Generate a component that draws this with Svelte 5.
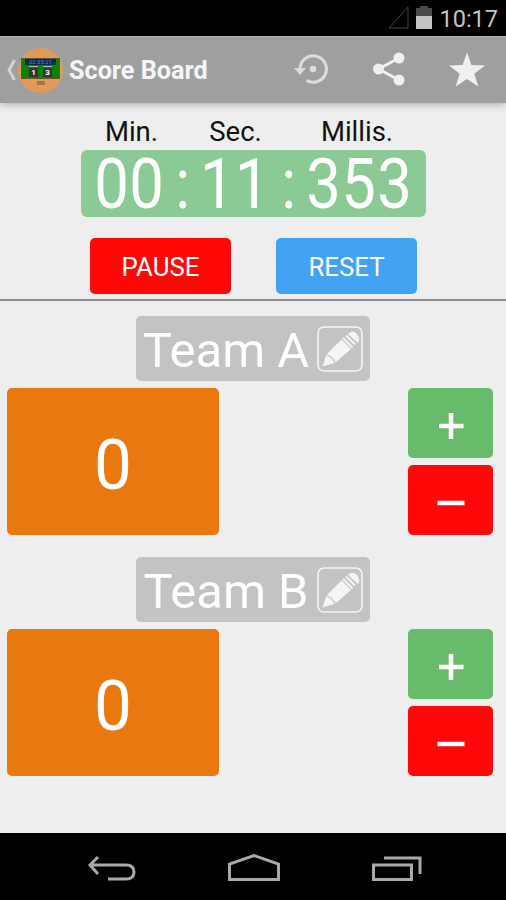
<script lang="ts">
	type Team = { name: string; score: number };

	let teams = $state<Team[]>([
		{ name: 'Team A', score: 0 },
		{ name: 'Team B', score: 0 }
	]);
	let clock = $state('00:11:353');

	function change(team: Team, by: number) {
		team.score = Math.max(0, team.score + by);
	}
</script>

<div class="screen">
	<div class="status">
		<svg class="signal" viewBox="0 0 21 23"><path d="M20 1v21H1z" /></svg>
		<svg class="battery" viewBox="0 0 16 23">
			<path d="M4 0h8v2h4v9H0V2h4z" fill="#4a4a4a" />
			<path d="M0 10h16v13H0z" fill="#c4c4c4" />
		</svg>
		<span>10:17</span>
	</div>

	<header>
		<svg class="up" viewBox="0 0 10 22"><path d="M8.500 1 3 11l5.500 10" /></svg>
		<div class="logo">
			<div class="board">
				<div class="board-time">02:35:21</div>
				<div class="board-names"><i></i><i></i></div>
				<div class="board-score"><b>1</b><b>3</b></div>
			</div>
			<div class="board-foot"></div>
		</div>
		<h1>Score Board</h1>
		<svg class="restore" viewBox="0 0 34 30">
			<path d="M6 15a13.200 13.200 0 1 1 6.500 11.400" fill="none" stroke="#dcdcdc" stroke-width="3" />
			<path d="M0 14h12l-6 7z" fill="#dcdcdc" />
			<circle cx="19" cy="15" r="3.200" fill="#dcdcdc" />
		</svg>
		<svg class="share" viewBox="0 0 32 34">
			<path d="M26 6 5.500 17 26 28" fill="none" stroke="#f0f0f0" stroke-width="3" />
			<circle cx="26" cy="6" r="5.500" />
			<circle cx="5.500" cy="17" r="5.500" />
			<circle cx="26" cy="28" r="5.500" />
		</svg>
		<svg class="star" viewBox="0 0 36 34">
			<path d="m18 0 4.400 12.600L36 13 25.300 21.300 29.300 34 18 26.400 6.700 34l4-12.700L0 13l13.600-.4z" />
		</svg>
	</header>

	<section class="timer">
		<div class="units">
			<span>Min.</span>
			<span>Sec.</span>
			<span>Millis.</span>
		</div>
		<div class="clock">
			{#each clock as char}
				<span class:one={char === '1'}>{char}</span>
			{/each}
		</div>
		<div class="controls">
			<button class="red">PAUSE</button>
			<button class="blue">RESET</button>
		</div>
	</section>

	<main>
		{#each teams as team}
			<section class="team">
				<button class="name">
					<span>{team.name}</span>
					<svg viewBox="0 0 46 46">
						<rect x="1" y="1" width="44" height="44" rx="6" fill="none" stroke="#f5f5f5" stroke-width="1.700" />
						<path d="M5.500 40.500 9.500 28.500 24.500 13.500 34 23 18.500 36.500z" fill="#f5f5f5" />
						<path d="m9.500 28.500 4.500 2.500 4.500 5.500" fill="none" stroke="#c3c3c3" stroke-width="1.200" />
						<path d="m26 12 9.500 9.500M29 9.500l9 9" stroke="#f5f5f5" stroke-width="2" />
						<path d="M31 8q5-5 9 0t1 9z" fill="#f5f5f5" />
					</svg>
				</button>
				<div class="row">
					<div class="score"><span>{team.score}</span></div>
					<div class="steps">
						<button class="green" aria-label="Add point" onclick={() => change(team, 1)}>
							<svg viewBox="0 0 28 28"><path d="M14 1v26M2 14h24.500" /></svg>
						</button>
						<button class="red" aria-label="Remove point" onclick={() => change(team, -1)}>
							<svg viewBox="0 0 28 28"><path d="M.5 14h27" /></svg>
						</button>
					</div>
				</div>
			</section>
		{/each}
	</main>

	<nav>
		<svg viewBox="0 0 52 30">
			<path d="M13 4 5 12l8 9M5 12h36q8 0 8 7t-8 7H23" />
		</svg>
		<svg viewBox="0 0 52 30">
			<path d="M1.500 26.500V11L26 2.500 50.500 11v15.500z" />
		</svg>
		<svg viewBox="0 0 52 30">
			<path d="M2.500 12h38v14.500h-38zM13 5h36v16" />
		</svg>
	</nav>
</div>

<style>
	:global(body) {
		margin: 0;
	}

	.screen {
		display: flex;
		flex-direction: column;
		width: 506px;
		height: 900px;
		overflow: hidden;
		background: #eee;
		color: #111;
		font-family: Roboto, 'Liberation Sans', sans-serif;
	}

	svg {
		display: block;
		flex: none;
	}

	button {
		display: flex;
		align-items: center;
		justify-content: center;
		padding: 0;
		border: 0;
		border-radius: 5px;
		color: #fff;
		font: inherit;
	}

	.status {
		display: flex;
		align-items: center;
		justify-content: flex-end;
		height: 36px;
		padding-right: 8px;
		box-sizing: border-box;
		background: #000;
		color: #c4c4c4;
		font-size: 23.500px;
	}

	.status span {
		padding-top: 2px;
	}

	.signal {
		width: 21px;
		height: 23px;
		margin: -1px 7px 0 0;
		fill: none;
		stroke: #444;
	}

	.battery {
		width: 16px;
		height: 23px;
		margin: -1px 7px 0 0;
	}

	header {
		display: flex;
		align-items: center;
		height: 67px;
		flex: none;
		padding: 0 21px 0 6px;
		border-top: 1px solid #b4b4b4;
		box-sizing: border-box;
		background: #9f9f9f;
		box-shadow: 0 1px 9px rgb(0 0 0 / 30%);
	}

	.up {
		width: 10px;
		height: 22px;
		margin-right: 2px;
		fill: none;
		stroke: #d2d2d2;
		stroke-width: 3;
	}

	.logo {
		display: flex;
		flex-direction: column;
		align-items: center;
		width: 45px;
		height: 45px;
		border-radius: 50%;
		background: #e29a5c;
	}

	.board {
		width: 39px;
		height: 21px;
		margin-top: 10px;
		box-sizing: border-box;
		border: 1px solid #5e5a28;
		background: #078307;
	}

	.board-time {
		width: 31px;
		height: 6px;
		margin: 0 auto;
		background: #0c2454;
		color: #3f8ae0;
		font-size: 6px;
		line-height: 6px;
		text-align: center;
	}

	.board-names,
	.board-score {
		display: flex;
		justify-content: center;
		gap: 5px;
	}

	.board-names {
		padding: 1px 0;
	}

	.board-names i {
		width: 9px;
		height: 1px;
		background: #8fca8f;
	}

	.board-score b {
		width: 9px;
		height: 9px;
		background: #343434;
		color: #fff;
		font-size: 8px;
		line-height: 9px;
		text-align: center;
	}

	.board-foot {
		width: 8px;
		height: 4px;
		margin-top: 2px;
		background: #a1764c;
	}

	h1 {
		flex: 1;
		margin: 0 0 0 6px;
		color: #f6f6f6;
		font-size: 25.200px;
		font-weight: 700;
		white-space: nowrap;
	}

	.restore {
		width: 34px;
		height: 30px;
		margin: -2px 45px 0 0;
	}

	.share {
		width: 32px;
		height: 34px;
		margin: -2px 44px 0 0;
		fill: #f0f0f0;
	}

	.star {
		width: 36px;
		height: 35px;
		margin-top: -2px;
		fill: #f0f0f0;
	}

	.timer {
		display: flex;
		flex-direction: column;
		align-items: center;
		flex: none;
		height: 198px;
		padding-top: 13px;
		border-bottom: 2px solid #8c8c8c;
		box-sizing: border-box;
	}

	.units {
		display: grid;
		grid-template-columns: 102px 106px 137px;
		width: 345px;
		height: 34px;
		font-size: 27.500px;
		line-height: 31px;
		text-align: center;
	}

	.clock {
		display: flex;
		align-items: center;
		justify-content: center;
		width: 345px;
		height: 67px;
		border-radius: 6px;
		background: #8bc995;
		color: #fff;
		font-size: 70px;
		line-height: 67px;
	}

	.clock span {
		display: flex;
		justify-content: center;
		width: 35.300px;
		padding-top: 2px;
		transform: scaleX(0.88);
	}

	.clock .one {
		padding-left: 6px;
		margin-left: -6px;
	}

	.controls {
		display: flex;
		gap: 45px;
		margin-top: 21px;
	}

	.controls button {
		width: 141px;
		height: 56px;
		padding: 2px 0 0 1px;
		box-sizing: border-box;
		font-size: 25.800px;
	}

	.red {
		background: #fe0808;
	}

	.blue {
		background: #42a3f5;
	}

	.green {
		background: #67bb6a;
	}

	main {
		flex: 1;
		padding: 15px 13px 0 7px;
	}

	.team {
		height: 241px;
	}

	.name {
		gap: 8px;
		width: 234px;
		height: 65px;
		margin: 0 auto 7px;
		/* centred on the screen, not between the uneven side paddings */
		transform: translateX(3px);
		background: #c3c3c3;
		font-size: 49px;
	}

	.name span {
		padding-top: 3px;
	}

	.name svg {
		width: 46px;
		height: 46px;
	}

	.row {
		display: flex;
		justify-content: space-between;
	}

	.score {
		width: 212px;
		height: 147px;
		border-radius: 5px;
		background: #ea7811;
		color: #fff;
		font-size: 71px;
		line-height: 153px;
		text-align: center;
	}

	.score span {
		display: inline-block;
		transform: scaleX(0.95);
	}

	.steps {
		display: grid;
		gap: 7px;
	}

	.steps button {
		width: 85px;
		height: 70px;
	}

	.steps svg {
		width: 28px;
		height: 28px;
		margin-top: 6px;
		fill: none;
		stroke: #fff;
		stroke-width: 4.500;
	}

	nav {
		display: flex;
		align-items: center;
		justify-content: center;
		gap: 91px;
		height: 67px;
		padding: 3px 0 0 2px;
		box-sizing: border-box;
		background: #000;
	}

	nav svg {
		width: 52px;
		height: 30px;
		fill: none;
		stroke: #a9a9a9;
		stroke-width: 3;
	}
</style>
